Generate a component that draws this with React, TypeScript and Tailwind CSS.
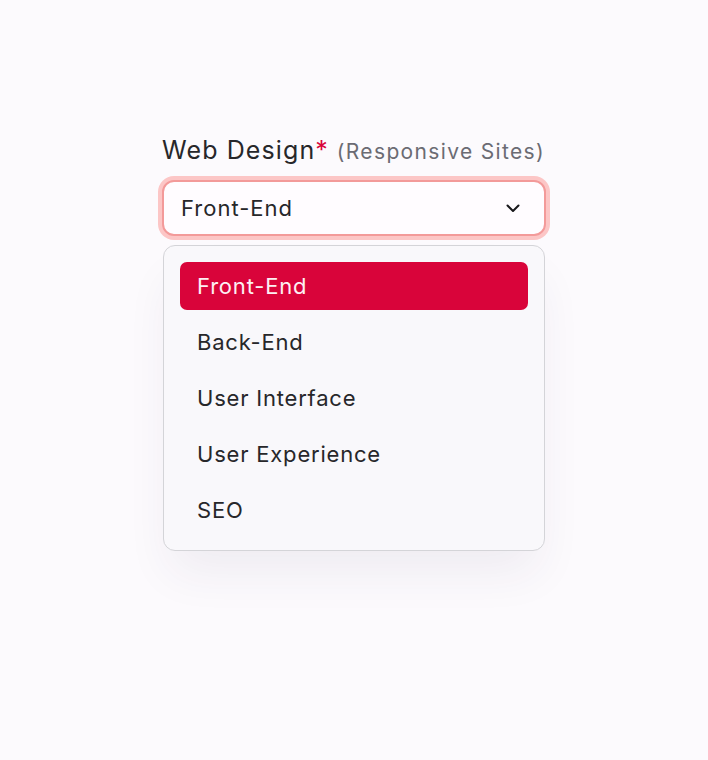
import { useState } from 'react';

const OPTIONS = ['Front-End', 'Back-End', 'User Interface', 'User Experience', 'SEO'];

function Chevron() {
  return (
    <svg width="16" height="16" viewBox="0 0 16 16" fill="none" className="shrink-0">
      <path d="M2.5 5.5 8 11l5.5-5.5" stroke="#18181b" strokeWidth="2" strokeLinecap="round" strokeLinejoin="round" />
    </svg>
  );
}

export default function App() {
  const [value, setValue] = useState('Front-End');

  return (
    <div
      className="min-h-[760px] w-full bg-[#fcfafd] flex justify-center pt-[132px]"
      style={{ fontFamily: 'Inter, "Noto Sans", sans-serif' }}
    >
      <div className="w-[384px] flex flex-col">
        {/* Label */}
        <div className="flex items-baseline h-[36px] mb-[12px] whitespace-nowrap">
          <span className="shrink-0 text-[25px] text-[#27272a] tracking-[1.1px]">Web Design</span>
          <span className="shrink-0 text-[25px] text-[#d9043a] leading-none">*</span>
          <span className="shrink-0 ml-[9px] text-[21px] text-[#6b6b73] tracking-[1.35px]">(Responsive Sites)</span>
        </div>

        {/* Trigger */}
        <button className="h-[56px] w-full rounded-[12px] bg-[#fffcff] border-2 border-[#f39a9a] ring-[4px] ring-[#fcc6c6] flex items-center justify-between pl-[17px] pr-[23px] text-left">
          <span className="text-[22px] text-[#27272a] tracking-[1px]">{value}</span>
          <Chevron />
        </button>

        {/* Menu */}
        <div className="mt-[9px] mx-[1px] rounded-[12px] border border-[#d4d4d8] bg-[#f9f8fb] p-[16px] flex flex-col gap-[8px] shadow-[0_28px_48px_-8px_rgba(60,40,80,0.07)]">
          {OPTIONS.map((o) => (
            <div
              key={o}
              onClick={() => setValue(o)}
              className={
                o === value
                  ? 'h-[48px] rounded-[7px] bg-[#d9043a] text-[#fdf0f3] flex items-center px-[17px] text-[22px] tracking-[0.8px]'
                  : 'h-[48px] rounded-[7px] text-[#27272a] flex items-center px-[17px] text-[22px] tracking-[0.8px]'
              }
            >
              {o}
            </div>
          ))}
        </div>
      </div>
    </div>
  );
}
